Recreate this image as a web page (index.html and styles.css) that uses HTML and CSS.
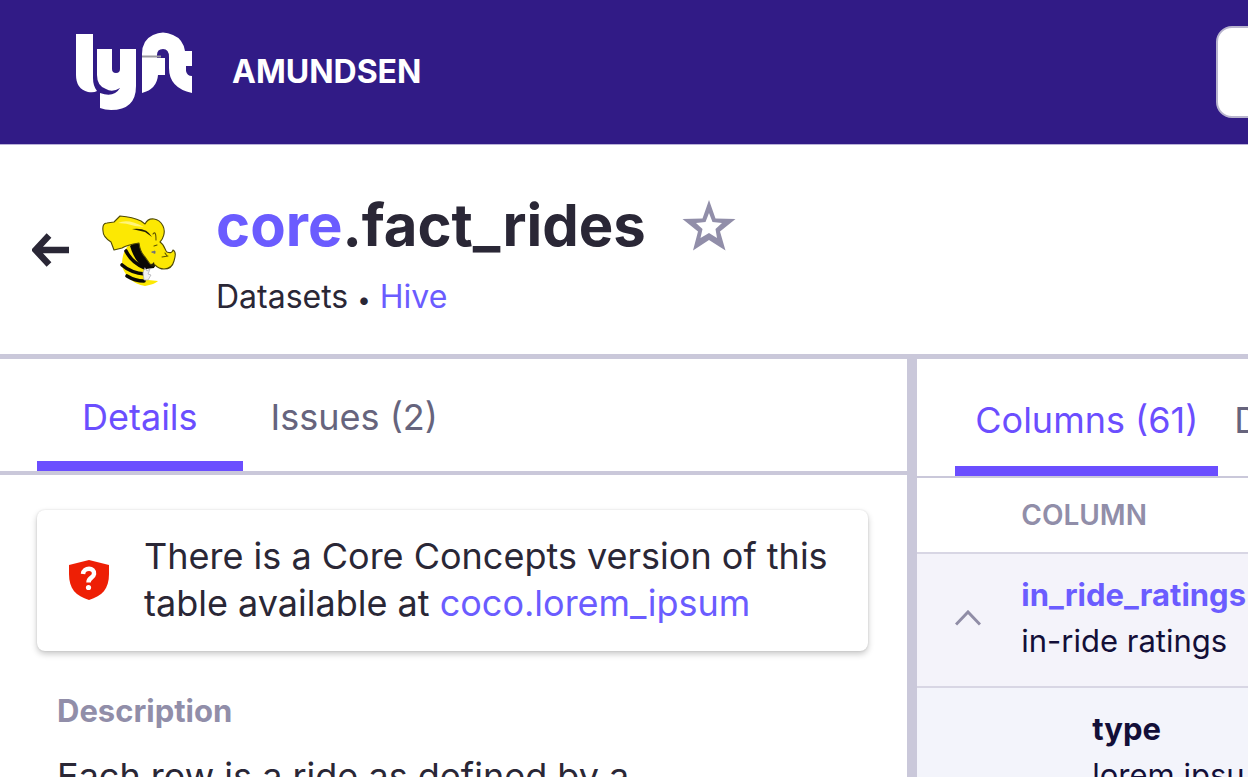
FILE: index.html
```html
<!DOCTYPE html>
<html lang="en">
<head>
<meta charset="utf-8">
<meta name="viewport" content="width=device-width, initial-scale=1">
<title>core.fact_rides - Amundsen</title>
<link rel="stylesheet" href="styles.css">
</head>
<body>
<header class="navbar">
  <a class="brand" href="#">
    <svg class="brand-logo" viewBox="0 0 118 80" role="img" aria-label="Lyft">
      <g fill="#fff">
        <path d="M1 2H18V46Q18 54 22 59Q19 61 13 60Q1 57 1 43Z"/>
        <path d="M22 17H37V37Q37 41 41 41Q45 41 45 37V17H61V54Q61 78 36 78Q30 78 25 76V61Q39 66 45 56Q37 61 31 57Q22 54 22 43Z"/>
        <path d="M67 61V22Q67 8 78 3Q88-2 98 3Q108 7 110 19H117V34H111V39Q112 44 117 44V61Q94 56 94 36V25Q94 17 88 17Q82 17 82 23V26H90V43H83Q82 57 67 61Z"/>
      </g>
      <path d="M67 24.500H86" stroke="#9a999f" stroke-width="2"/>
    </svg>
    <span class="brand-name">AMUNDSEN</span>
  </a>
  <input class="search" type="search" aria-label="Search">
</header>

<main>
  <section class="resource">
    <a class="back" href="#" aria-label="Back">
      <svg viewBox="0 0 38 34" fill="none" stroke="#2a2736" stroke-width="6.500"><path d="M17 2.500L3.500 17L17 31.500M4 17H37"/></svg>
    </a>
    <svg class="hive-logo" viewBox="0 0 74 72" role="img" aria-label="Hive" stroke-linejoin="round" stroke-linecap="round">
      <path d="M28 30C22 35 20 42 20 52C23 62 31 70 43 72C49 71 54 69 56 67L46 66L42 48L38 28Z" fill="#fce803"/>
      <g fill="none" stroke="#090805" stroke-width="3.600"><path d="M24 37Q30 49 43 54"/><path d="M20 51Q29 59 43 60"/><path d="M25 62Q33 67 42 67"/></g>
      <path d="M28 32Q36 25 40 33Q44 48 53 51L52 54L44 55Q33 49 28 32Z" fill="#090805"/>
      <path d="M43 54L45 57L48 55L46 60L49 61L46 66L42 66L41 59Z" fill="#f2f2f4" stroke="#a9a9ae" stroke-width=".7"/>
      <path d="M43 10C47 2 57 4 61 12C64 18 61 25 58 28C63 31 63 37 65 38Q70 40 71 36Q75 38 72 47Q70 55 62 55Q57 55 53 51L48 50L43 43Q38 38 37 29Q25 31 20 34L12 36L9 28Q1 23 1 17Q0 9 5 9L12 8L18 2Q31 3 39 7Z" fill="#fce803" stroke="#4f4905" stroke-width="1.100"/>
      <path d="M16 9Q26 4 42 13L33 12Q24 9 16 9Z" fill="#fff47b"/>
      <path d="M52 32L55 31M60 43L66 42M63 39L65 42M51 20Q54 16 54 26" fill="none" stroke="#5b5304" stroke-width="1.100"/>
      <path d="M30 15Q45 13 50 23L43 18ZM48 52L52 48L53 53Z" fill="#221f05"/>
      <path d="M50 38L53 37L53 39Z" fill="#4b4b55" stroke="#77787f" stroke-width="1"/>
    </svg>
    <div class="resource-text">
      <div class="title-row">
        <h1 class="title"><a href="#">core</a>.fact_rides</h1>
        <button class="star" type="button" aria-label="Bookmark">
          <svg viewBox="0 0 54 51" fill="#918ea9" fill-rule="evenodd"><path d="M27 0L33.500 18.500L53.500 19L38 31.500L43.500 50.500L27 40L11 50.500L16 31.500L.5 19L20.500 18.500ZM27 13L23.500 22L14 23L20.500 29L18.500 38L27 33L35 38L33.500 29L40 23L30.500 22Z"/></svg>
        </button>
      </div>
      <p class="subtitle">Datasets <span class="dot">•</span> <a href="#">Hive</a></p>
    </div>
  </section>

  <div class="panels">
    <section class="details">
      <nav class="tabs">
        <a class="tab active" href="#">Details</a>
        <a class="tab" href="#">Issues (2)</a>
      </nav>
      <div class="details-body">
        <div class="notice">
          <svg class="shield" viewBox="0 0 42 40"><path d="M1 5L21 0L41 5V14C41 29 34 36 21 40C8 36 1 29 1 14Z" fill="#ee1f05"/><path d="M15 14C15.500 7 27 7 26 14C25.500 18 20.500 17.500 20.500 22.500" fill="none" stroke="#fff" stroke-width="4.500"/><circle cx="20.500" cy="27.500" r="2.600" fill="#fff"/></svg>
          <p class="notice-text">There is a Core Concepts version of this table available at <a href="#">coco.lorem_ipsum</a></p>
        </div>
        <div class="description">
          <h2 class="label">Description</h2>
          <p class="copy">Each row is a ride as defined by a</p>
        </div>
      </div>
    </section>

    <section class="columns">
      <nav class="tabs column-tabs">
        <a class="tab active" href="#">Columns (61)</a>
        <a class="tab" href="#">D</a>
      </nav>
      <table class="column-table">
        <thead>
          <tr><td class="toggle-cell"></td><th scope="col">COLUMN</th></tr>
        </thead>
        <tbody>
          <tr class="column-row">
            <td class="toggle-cell"><button class="toggle" type="button" aria-label="Collapse"><svg viewBox="0 0 26 16" fill="none" stroke="#908da6" stroke-width="3"><path d="M1 14.500L13 2L25 14.500"/></svg></button></td>
            <td class="name-cell"><a class="column-name" href="#">in_ride_ratings</a><p class="column-note">in-ride ratings</p></td>
          </tr>
          <tr class="stat-row">
            <td class="toggle-cell"></td>
            <td class="stat"><strong class="stat-name">type</strong><p class="column-note">lorem ipsu</p></td>
          </tr>
        </tbody>
      </table>
    </section>
  </div>
</main>
</body>
</html>
```
FILE: styles.css
```css
* { box-sizing: border-box; }
html, body { height: 100%; }
body {
  margin: 0;
  display: flex;
  flex-direction: column;
  overflow: hidden;
  background: #fff;
  color: #2a2736;
  font-family: Inter, "Liberation Sans", sans-serif;
}
h1, h2, p { margin: 0; }
a { color: #6b5cff; text-decoration: none; }
button { padding: 0; border: 0; background: none; }
svg { display: block; }

.navbar {
  flex: none;
  display: flex;
  align-items: center;
  height: 145px;
  padding-left: 75px;
  overflow: hidden;
  background: #311b86;
  border-bottom: 1px solid #b9b1d8;
}
.brand { flex: 1; display: flex; align-items: center; gap: 39px; color: #fff; }
.brand-logo { width: 118px; height: 80px; }
.brand-name { font-size: 32px; line-height: 40px; font-weight: 700; }
.search {
  flex: none;
  width: 640px;
  height: 92px;
  margin-right: -608px;
  border: 2px solid #b9b5ce;
  border-radius: 16px;
  background: #fff;
}

main { flex: 1; min-height: 0; display: flex; flex-direction: column; }
.resource {
  flex: none;
  display: flex;
  align-items: center;
  height: 214px;
  padding-left: 32px;
  border-bottom: 5px solid #cac8da;
}
.back svg { width: 38px; height: 34px; }
.hive-logo { width: 74px; height: 72px; margin: 0 40px 0 32px; }
.resource-text { padding-top: 10px; }
.title-row { display: flex; align-items: center; gap: 36px; }
.title { font-size: 58px; line-height: 72px; font-weight: 700; }
.star svg { width: 54px; height: 51px; }
.subtitle { margin-top: 16px; font-size: 32px; line-height: 40px; }
.dot { font-size: 24px; }

.panels { flex: 1; min-height: 0; display: flex; }
.details {
  flex: 0 0 73.5%;
  border-right: 10px solid #cac8da;
  overflow: hidden;
}
.tabs {
  display: flex;
  height: 116px;
  padding-left: 37px;
  border-bottom: 4px solid #cac8da;
}
.tab {
  padding: 34px 45px 0;
  border-bottom: 10px solid transparent;
  font-size: 36px;
  line-height: 48px;
  color: #66647d;
  white-space: nowrap;
}
.tab.active { color: #6b4eff; border-color: #6b4eff; }
.tab + .tab { padding-left: 28px; }
.details-body { padding: 35px 39px 0 37px; }
.notice {
  display: flex;
  align-items: center;
  gap: 34px;
  padding: 23px 24px 24px 31px;
  border-radius: 8px;
  box-shadow: 0 3px 6px rgba(0, 0, 0, .22), 0 0 2px rgba(0, 0, 0, .12);
}
.shield { flex: none; width: 42px; height: 40px; }
.notice-text { font-size: 36px; line-height: 47px; }
.description { padding: 40px 20px 0; }
.label { font-size: 31px; line-height: 40px; font-weight: 700; color: #918ea9; }
.copy { margin-top: 22px; font-size: 36px; line-height: 47px; }

.columns { flex: 1; min-width: 0; overflow: hidden; }
.column-tabs { height: 119px; padding-left: 38px; border-bottom-width: 2px; }
.column-tabs .tab { padding: 37px 20px 0; }
.column-tabs .tab + .tab { padding-left: 16px; }
.column-table { width: 100%; border-collapse: collapse; white-space: nowrap; }
.column-table td, .column-table th { padding: 0; text-align: left; vertical-align: middle; }
.column-table tr { border-bottom: 2px solid #d8d6e4; }
.column-table .toggle-cell { width: 104px; min-width: 104px; padding-left: 38px; }
.column-table th { height: 75px; font-size: 28px; font-weight: 600; color: #918ea9; }
.column-row { height: 134px; background: #f4f3fa; }
.stat-row { background: #f3f4fb; }
.toggle svg { width: 26px; height: 16px; }
.column-table .name-cell { padding-bottom: 4px; }
.column-name { font-size: 31px; line-height: 46px; font-weight: 700; }
.column-note { font-size: 31px; line-height: 46px; color: #130f38; }
.column-table .stat { padding: 18px 0 0 71px; }
.stat-name { font-size: 31px; line-height: 46px; color: #130f38; }
```
